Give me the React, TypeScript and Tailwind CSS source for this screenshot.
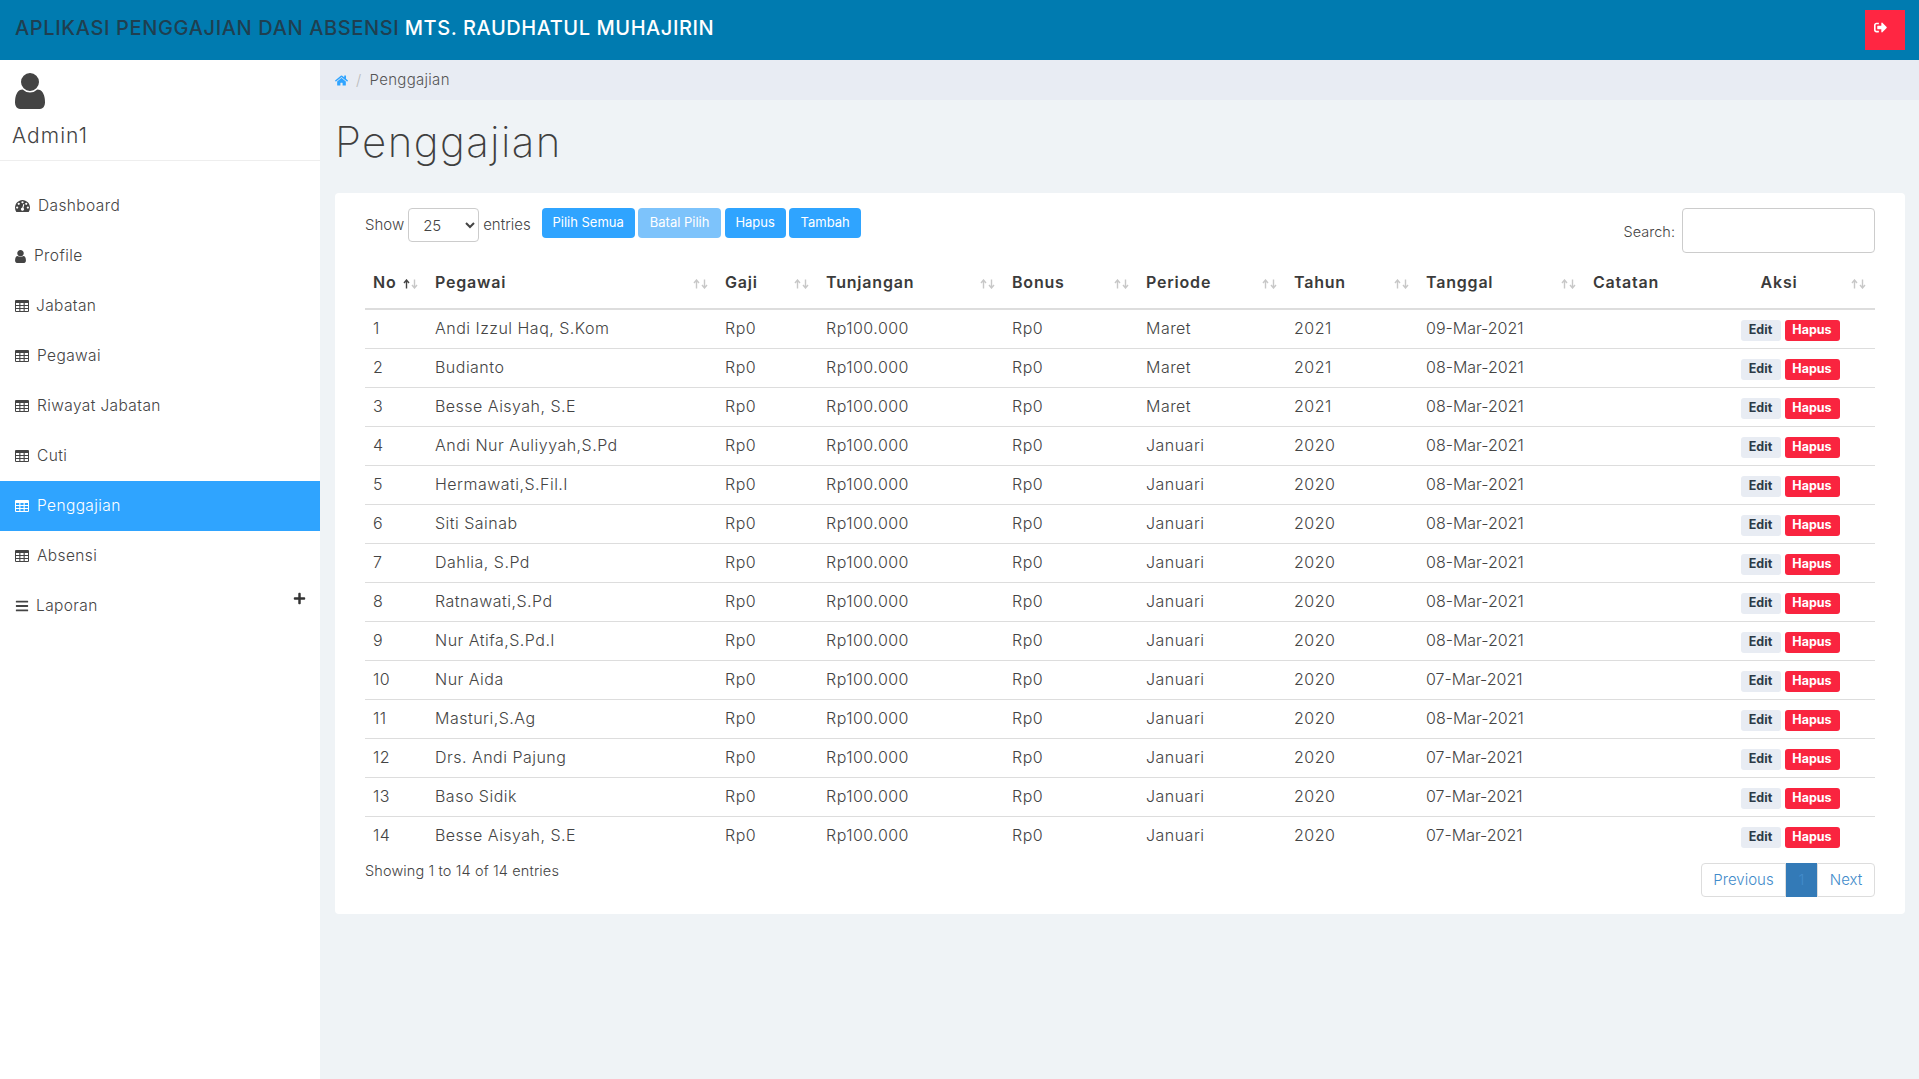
import { FaHome, FaSignOutAlt, FaBars, FaPlus } from "react-icons/fa";

const rows = [
  ["1", "Andi Izzul Haq, S.Kom", "Maret", "2021", "09-Mar-2021"],
  ["2", "Budianto", "Maret", "2021", "08-Mar-2021"],
  ["3", "Besse Aisyah, S.E", "Maret", "2021", "08-Mar-2021"],
  ["4", "Andi Nur Auliyyah,S.Pd", "Januari", "2020", "08-Mar-2021"],
  ["5", "Hermawati,S.Fil.I", "Januari", "2020", "08-Mar-2021"],
  ["6", "Siti Sainab", "Januari", "2020", "08-Mar-2021"],
  ["7", "Dahlia, S.Pd", "Januari", "2020", "08-Mar-2021"],
  ["8", "Ratnawati,S.Pd", "Januari", "2020", "08-Mar-2021"],
  ["9", "Nur Atifa,S.Pd.I", "Januari", "2020", "08-Mar-2021"],
  ["10", "Nur Aida", "Januari", "2020", "07-Mar-2021"],
  ["11", "Masturi,S.Ag", "Januari", "2020", "08-Mar-2021"],
  ["12", "Drs. Andi Pajung", "Januari", "2020", "07-Mar-2021"],
  ["13", "Baso Sidik", "Januari", "2020", "07-Mar-2021"],
  ["14", "Besse Aisyah, S.E", "Januari", "2020", "07-Mar-2021"],
];

function UserIcon({ className }: { className: string }) {
  return (
    <svg viewBox="256 128 1280 1536" className={className} fill="currentColor">
      <path d="M1536 1399q0 109-62.5 187t-150.5 78h-854q-88 0-150.5-78t-62.5-187q0-85 8.5-160.5t31.5-151.5 58.5-130 94-88.5 134.5-34.5q131 128 313 128t313-128q76 0 134.5 34.5t94 88.5 58.5 130 31.5 151.5 8.5 160.5zm-256-887q0 159-112.5 271.5t-271.5 112.5-271.5-112.5-112.5-271.5 112.5-271.5 271.5-112.5 271.5 112.5 112.5 271.5z" />
    </svg>
  );
}

function DashboardIcon() {
  return (
    <svg viewBox="0 256 1792 1408" className="w-[15px] h-[12px] shrink-0" fill="currentColor">
      <path d="M384 1152q0-53-37.5-90.5t-90.5-37.5-90.5 37.5-37.5 90.5 37.5 90.5 90.5 37.5 90.5-37.5 37.5-90.5zm192-448q0-53-37.5-90.5t-90.5-37.5-90.5 37.5-37.5 90.5 37.5 90.5 90.5 37.5 90.5-37.5 37.5-90.5zm428 481l101-382q6-26-7.5-48.5t-38.5-29.5-48 6.5-30 39.5l-101 382q-60 5-107 43.5t-63 98.5q-20 77 20 146t117 89 146-20 89-117q16-60-6-117t-72-91zm660-33q0-53-37.5-90.5t-90.5-37.5-90.5 37.5-37.5 90.5 37.5 90.5 90.5 37.5 90.5-37.5 37.5-90.5zm-640-640q0-53-37.5-90.5t-90.5-37.5-90.5 37.5-37.5 90.5 37.5 90.5 90.5 37.5 90.5-37.5 37.5-90.5zm448 192q0-53-37.5-90.5t-90.5-37.5-90.5 37.5-37.5 90.5 37.5 90.5 90.5 37.5 90.5-37.5 37.5-90.5zm320 448q0 261-141 483-19 29-54 29h-1402q-35 0-54-29-141-221-141-483 0-182 71-348t191-286 286-191 348-71 348 71 286 191 191 286 71 348z" />
    </svg>
  );
}

function TableIcon() {
  return (
    <svg viewBox="0 0 14 12" className="w-[14px] h-[12px] shrink-0" fill="currentColor">
      <path fillRule="evenodd" d="M1 0h12a1 1 0 0 1 1 1v10a1 1 0 0 1-1 1H1a1 1 0 0 1-1-1V1a1 1 0 0 1 1-1zM1 3v2h3.3V3zm4.4 0v2h3.2V3zm4.3 0v2H13V3zM1 6v2h3.3V6zm4.4 0v2h3.2V6zm4.3 0v2H13V6zM1 9v2h3.3V9zm4.4 0v2h3.2V9zm4.3 0v2H13V9z" />
    </svg>
  );
}

function SortIcon({ active }: { active?: boolean }) {
  return (
    <svg viewBox="0 0 15 10" className="absolute right-[9px] top-[26px] w-[15px] h-[10px]" fill="none" strokeWidth="1.4">
      <path d="M3.5 9.5V1.5M1 4l2.5-3L6 4" stroke={active ? "#444444" : "#c8c8c8"} />
      <path d="M11.5 0.5V8.5M9 6l2.5 3L14 6" stroke="#c8c8c8" />
    </svg>
  );
}

function MenuItem({ label, gap, active, icon }: { label: string; gap: string; active?: boolean; icon: React.ReactNode }) {
  return (
    <div className={`h-[50px] pl-[15px] flex items-center relative ${gap} ${active ? "bg-[#2fa4ff] text-white" : "text-[#444444]"}`}>
      {icon}
      <span className="text-[15.5px] tracking-[0.025em] font-light">{label}</span>
    </div>
  );
}

function Th({ label, left, active }: { label: string; left?: boolean; active?: boolean }) {
  return (
    <th className={`relative h-[57px] border-b-2 border-[#dddddd] pl-[8px] pr-[30px] pt-[2px] text-[16px] font-semibold text-[#3b3b3b] tracking-[0.05em] ${left ? "text-left" : "text-center"}`}>
      {label}
      <SortIcon active={active} />
    </th>
  );
}

export default function App() {
  return (
    <div className="h-screen overflow-hidden flex flex-col bg-[#eff3f6] font-['Inter',sans-serif] text-[#444444]">
      <header className="h-[60px] shrink-0 bg-[#007bb0] flex items-center justify-between pl-[15px] pr-[14px]">
        <div className="text-[20px] pb-[4px] font-medium">
          <span className="text-[#1f3f50] tracking-[0.032em]">APLIKASI PENGGAJIAN DAN ABSENSI</span>{" "}
          <span className="text-white tracking-[0.028em]">MTS. RAUDHATUL MUHAJIRIN</span>
        </div>
        <div className="w-[40px] h-[40px] bg-[#ff2642] text-white flex pl-[9px] pt-[11px]">
          <FaSignOutAlt className="w-[13px] h-[13px]" />
        </div>
      </header>

      <div className="flex-1 flex min-h-0">
        <aside className="w-[320px] shrink-0 bg-white">
          <div className="h-[101px] border-b border-[#eeeeee] pl-[15px] pt-[13px]">
            <UserIcon className="w-[30px] h-[36px] text-[#444444]" />
            <div className="-ml-[3px] mt-[12px] text-[21px] font-light leading-[30px] tracking-[0.05em]">Admin1</div>
          </div>
          <nav className="pt-[20px]">
            <MenuItem label="Dashboard" gap="gap-[8px]" icon={<DashboardIcon />} />
            <MenuItem label="Profile" gap="gap-[8px]" icon={<UserIcon className="w-[11px] h-[13px]" />} />
            <MenuItem label="Jabatan" gap="gap-[7px]" icon={<TableIcon />} />
            <MenuItem label="Pegawai" gap="gap-[8px]" icon={<TableIcon />} />
            <MenuItem label="Riwayat Jabatan" gap="gap-[8px]" icon={<TableIcon />} />
            <MenuItem label="Cuti" gap="gap-[8px]" icon={<TableIcon />} />
            <MenuItem label="Penggajian" gap="gap-[8px]" active icon={<TableIcon />} />
            <MenuItem label="Absensi" gap="gap-[8px]" icon={<TableIcon />} />
            <div className="relative">
              <MenuItem label="Laporan" gap="gap-[7px]" icon={<FaBars className="w-[14px] h-[14px]" />} />
              <FaPlus className="absolute left-[293px] top-[11px] w-[13px] h-[13px] text-[#333333]" />
            </div>
          </nav>
        </aside>

        <main className="flex-1 min-w-0">
          <div className="h-[40px] bg-[#e8ecf3] pl-[15px] flex items-center text-[15px] font-light tracking-[0.02em] text-[#555555]">
            <FaHome className="w-[13px] h-[13px] text-[#2fa4ff]" />
            <span className="ml-[8px] mr-[8px] text-[#bbbbbb]">/</span>
            <span>Penggajian</span>
          </div>
          <div className="pl-[15px] pr-[14px]">
            <h1 className="h-[93px] pt-[17px] text-[42px] font-extralight tracking-[0.033em] leading-[50px] text-[#3f3f3f]">Penggajian</h1>
            <section className="bg-white rounded-[4px] pt-[15px] pb-[17px] px-[30px]">
              <div className="h-[45px] flex items-start justify-between">
                <div className="flex items-start">
                  <label className="h-[34px] flex items-center gap-[4px] text-[15px] font-light">
                    Show
                    <select defaultValue="25" className="w-[71px] h-[34px] pl-[10px] bg-white border border-[#cccccc] rounded-[4px] text-[15px] font-light">
                      <option>10</option>
                      <option>25</option>
                      <option>50</option>
                      <option>100</option>
                    </select>
                    entries
                  </label>
                  <div className="ml-[11px] flex gap-[3.5px] text-[13px] text-white">
                    <button className="w-[93px] h-[30px] rounded-[4px] bg-[#2fa4ff]">Pilih Semua</button>
                    <button className="w-[83px] h-[30px] rounded-[4px] bg-[#7dc3fb]">Batal Pilih</button>
                    <button className="w-[61px] h-[30px] rounded-[4px] bg-[#2fa4ff]">Hapus</button>
                    <button className="w-[72px] h-[30px] rounded-[4px] bg-[#2fa4ff]">Tambah</button>
                  </div>
                </div>
                <label className="flex items-center gap-[7px] text-[14.5px] font-light">
                  <span className="pt-[2px]">Search:</span>
                  <input className="w-[193px] h-[45px] bg-white border border-[#cccccc] rounded-[4px]" />
                </label>
              </div>

              <table className="w-[1510px] table-fixed border-separate border-spacing-0">
                <colgroup>
                  <col className="w-[62px]" />
                  <col className="w-[290px]" />
                  <col className="w-[101px]" />
                  <col className="w-[186px]" />
                  <col className="w-[134px]" />
                  <col className="w-[148px]" />
                  <col className="w-[132px]" />
                  <col className="w-[167px]" />
                  <col className="w-[120px]" />
                  <col className="w-[170px]" />
                </colgroup>
                <thead>
                  <tr>
                    <Th label="No" left active />
                    <Th label="Pegawai" left />
                    <Th label="Gaji" left />
                    <Th label="Tunjangan" left />
                    <Th label="Bonus" left />
                    <Th label="Periode" left />
                    <Th label="Tahun" left />
                    <Th label="Tanggal" left />
                    <th className="h-[57px] border-b-2 border-[#dddddd] pl-[8px] pt-[2px] text-left text-[16px] font-semibold text-[#3b3b3b] tracking-[0.05em]">Catatan</th>
                    <Th label="Aksi" />
                  </tr>
                </thead>
                <tbody className="text-[16px] font-light tracking-[0.03em]">
                  {rows.map((r, i) => (
                    <tr key={r[0]}>
                      {[r[0], r[1], "Rp0", "Rp100.000", "Rp0", r[2], r[3], r[4], ""].map((c, j) => (
                        <td key={j} className={`px-[8px] pb-[2px] ${j === 7 ? "tracking-[0]" : ""} ${i === 0 ? "h-[38px]" : "h-[39px] border-t border-[#dddddd]"}`}>{c}</td>
                      ))}
                      <td className={`${i === 0 ? "h-[38px]" : "h-[39px] border-t border-[#dddddd]"}`}>
                        <div className="flex justify-center gap-[4px] pt-[2px] text-[12.5px] font-bold tracking-[0]">
                          <span className="w-[40px] h-[21px] rounded-[3px] bg-[#e8ecf3] text-[#2c3a47] flex items-center justify-center">Edit</span>
                          <span className="w-[55px] h-[21px] rounded-[3px] bg-[#f9243f] text-white flex items-center justify-center">Hapus</span>
                        </div>
                      </td>
                    </tr>
                  ))}
                </tbody>
              </table>

              <div className="flex items-start justify-between mt-[8px]">
                <div className="-mt-[4px] leading-[24px] text-[14.5px] font-light tracking-[0.008em]">Showing 1 to 14 of 14 entries</div>
                <div className="h-[34px] flex text-[15px] font-light text-[#428bca]">
                  <span className="w-[85px] border border-[#dddddd] rounded-l-[4px] flex items-center justify-center">Previous</span>
                  <span className="w-[31px] bg-[#337ab7] flex items-center justify-center">1</span>
                  <span className="w-[58px] border border-[#dddddd] rounded-r-[4px] flex items-center justify-center">Next</span>
                </div>
              </div>
            </section>
          </div>
        </main>
      </div>
    </div>
  );
}
